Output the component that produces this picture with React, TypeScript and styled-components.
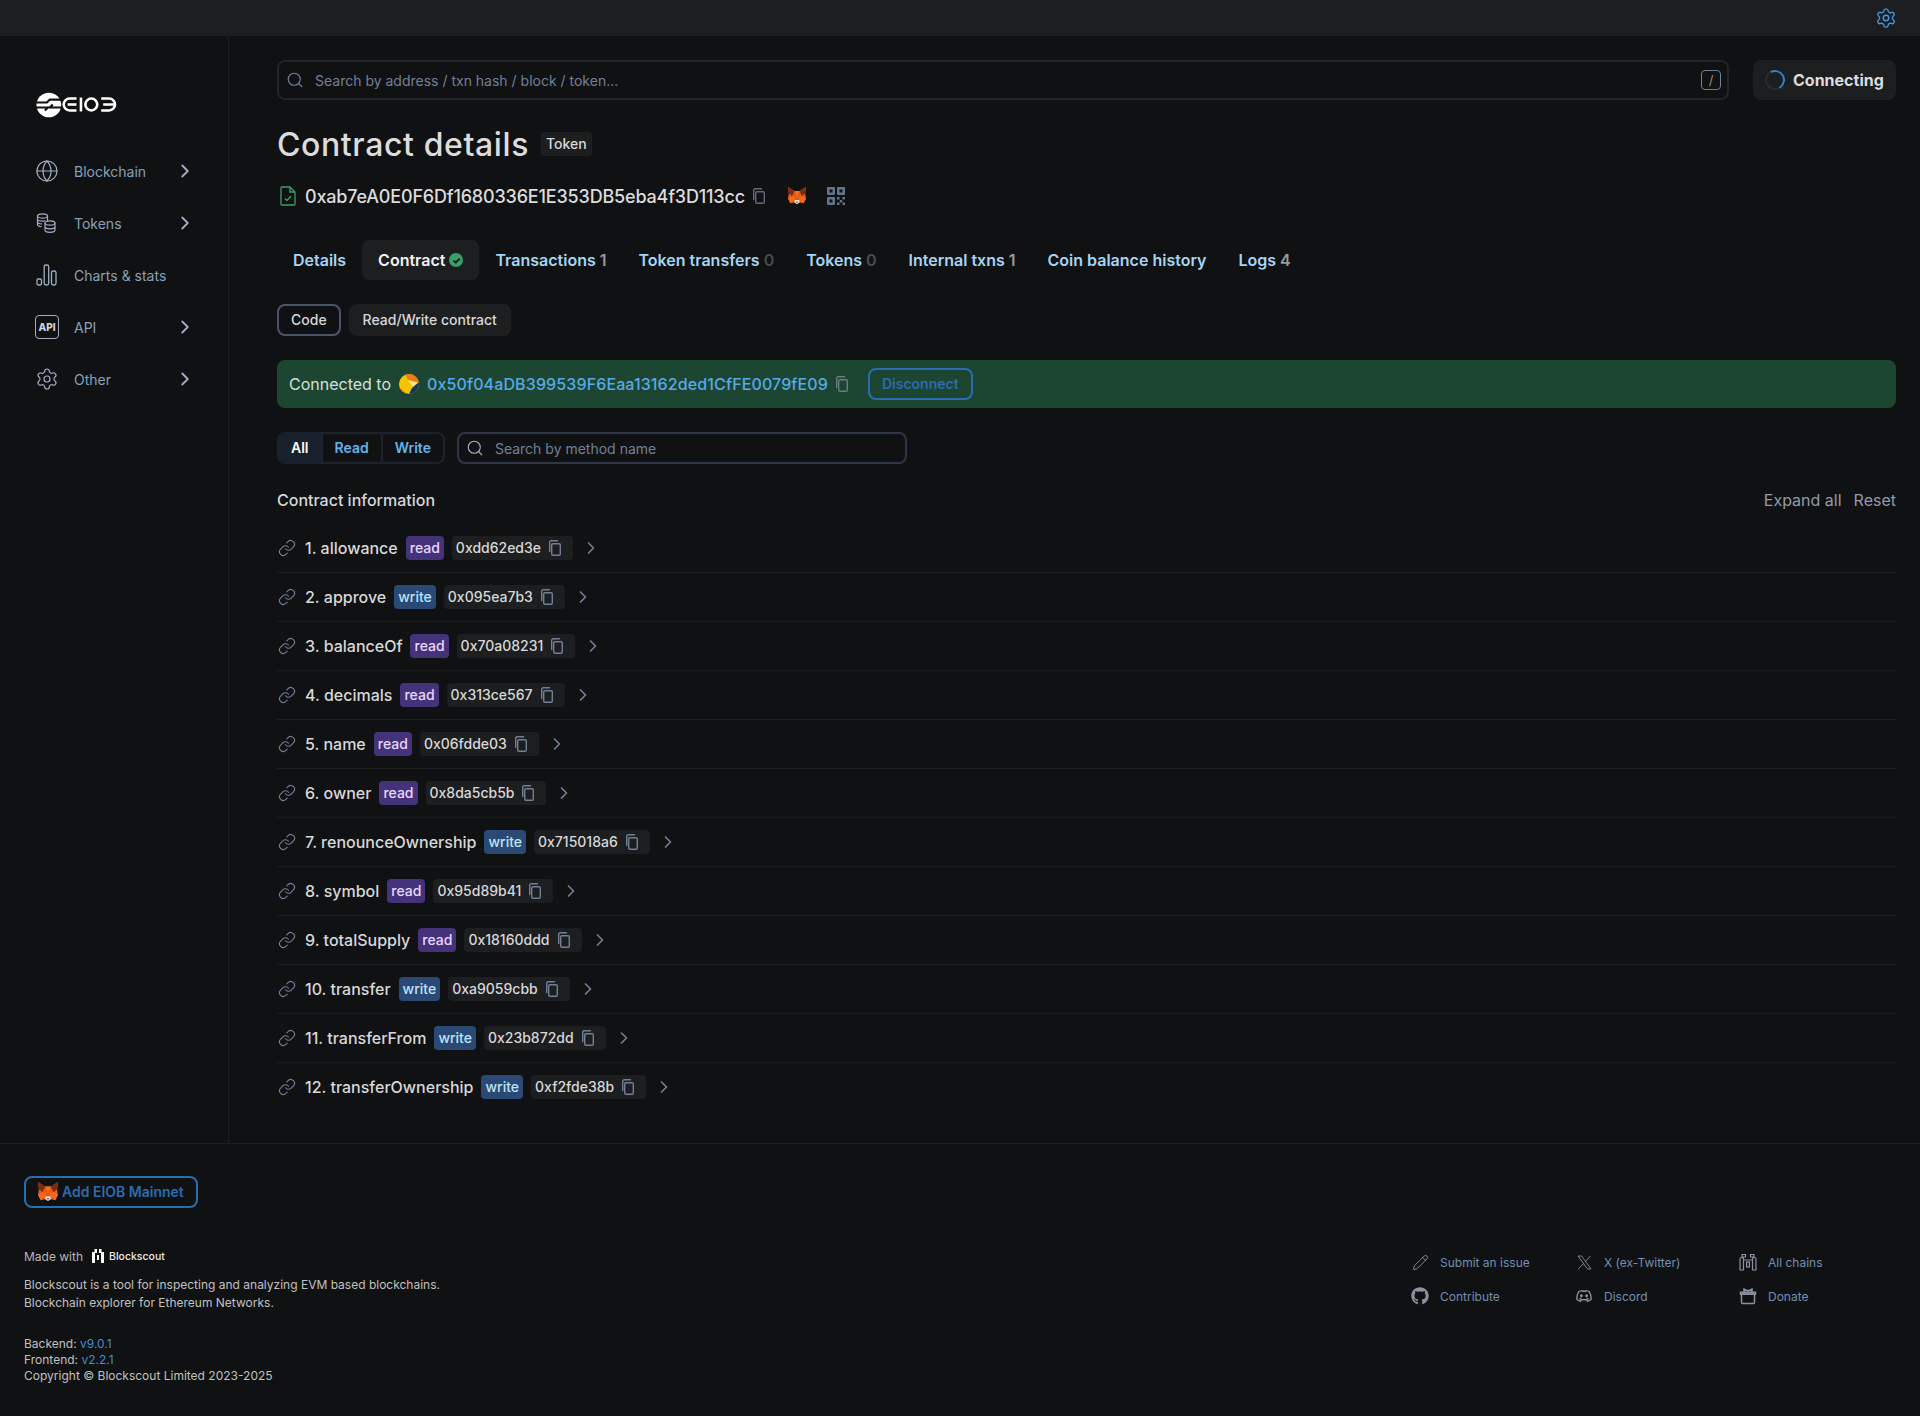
import React from "react";
import styled, { createGlobalStyle } from "styled-components";
import { ChevronRight, Globe, Link as LinkIcon, Pencil, Search, Settings } from "lucide-react";
import { FaGithub } from "react-icons/fa";
import { RiDiscordLine } from "react-icons/ri";

const methods = [
  { name: "1. allowance", kind: "read", hash: "0xdd62ed3e" },
  { name: "2. approve", kind: "write", hash: "0x095ea7b3" },
  { name: "3. balanceOf", kind: "read", hash: "0x70a08231" },
  { name: "4. decimals", kind: "read", hash: "0x313ce567" },
  { name: "5. name", kind: "read", hash: "0x06fdde03" },
  { name: "6. owner", kind: "read", hash: "0x8da5cb5b" },
  { name: "7. renounceOwnership", kind: "write", hash: "0x715018a6" },
  { name: "8. symbol", kind: "read", hash: "0x95d89b41" },
  { name: "9. totalSupply", kind: "read", hash: "0x18160ddd" },
  { name: "10. transfer", kind: "write", hash: "0xa9059cbb" },
  { name: "11. transferFrom", kind: "write", hash: "0x23b872dd" },
  { name: "12. transferOwnership", kind: "write", hash: "0xf2fde38b" },
];

const tabs = [
  { label: "Details" },
  { label: "Contract", active: true, verified: true },
  { label: "Transactions", count: "1" },
  { label: "Token transfers", count: "0", muted: true },
  { label: "Tokens", count: "0", muted: true },
  { label: "Internal txns", count: "1" },
  { label: "Coin balance history" },
  { label: "Logs", count: "4" },
];

const CopyGlyph = ({ size = 16 }: { size?: number }) => (
  <svg width={size} height={size} viewBox="0 0 16 16" fill="none" stroke="currentColor" strokeWidth="1.4">
    <rect x="4.7" y="3.7" width="8.6" height="11.6" rx="1.2" />
    <path d="M2.7 11.5V2.2c0-.8.6-1.500 1.500-1.500h6.300" strokeLinecap="round" />
  </svg>
);

const Fox = ({ size = 18 }: { size?: number }) => (
  <svg width={size} height={size} viewBox="1 1 22 22">
    <polygon points="1,1 9,6 15,6 23,1 22,9 23,15 20,21 15,20 9,20 4,21 1,15 2,9" fill="#e2591b" />
    <polygon points="1,1 9,6 6,12 2,9" fill="#7a2e10" />
    <polygon points="23,1 15,6 18,12 22,9" fill="#7a2e10" />
    <polygon points="9,6 15,6 12,14" fill="#f6701b" />
    <polygon points="6,12 10,13 9,17 4,21 1,15" fill="#ee6a1c" />
    <polygon points="18,12 14,13 15,17 20,21 23,15" fill="#ee6a1c" />
    <polygon points="9,17 15,17 15,20 12,22 9,20" fill="#f5e6d8" />
    <polygon points="10.500,19 13.500,19 12,20.500" fill="#232323" />
  </svg>
);

const QrGlyph = () => (
  <svg width="18" height="18" viewBox="0 0 18 18" fill="#64748b">
    <path fillRule="evenodd" d="M0 1.200C0 .5.5 0 1.200 0h5.600C7.500 0 8 .5 8 1.200v5.600C8 7.500 7.500 8 6.800 8H1.200C.5 8 0 7.500 0 6.800zM2.500 2.500v3h3v-3z" />
    <path fillRule="evenodd" d="M10 1.200C10 .5 10.500 0 11.200 0h5.600C17.500 0 18 .5 18 1.200v5.600c0 .7-.5 1.200-1.200 1.200h-5.600C10.500 8 10 7.500 10 6.800zM12.500 2.500v3h3v-3z" />
    <path fillRule="evenodd" d="M0 11.200C0 10.500.5 10 1.200 10h5.600C7.500 10 8 10.500 8 11.200v5.600C8 17.500 7.500 18 6.800 18H1.200C.5 18 0 17.500 0 16.800zM2.500 12.500v3h3v-3z" />
    <rect x="10" y="10" width="2.500" height="2.500" /><rect x="15.500" y="10" width="2.500" height="2.500" />
    <rect x="12.800" y="13" width="2.500" height="2.500" /><rect x="10" y="15.500" width="2.500" height="2.500" />
    <rect x="15.500" y="15.500" width="2.500" height="2.500" />
  </svg>
);

const CoinsGlyph = () => (
  <svg width="20" height="20" viewBox="0 0 20 20" fill="none" stroke="currentColor" strokeWidth="1.200">
    <ellipse cx="6.500" cy="3" rx="5" ry="2.200" />
    <path d="M1.500 3v8.500c0 1.200 1.800 2 4 2.200M11.500 3v5M1.500 6c0 1.200 2.200 2.200 5 2.200 1.200 0 2.200-.2 3-.5M1.500 8.800c0 1.200 2 2.100 4.500 2.200" />
    <ellipse cx="14" cy="10" rx="5" ry="2.200" />
    <path d="M9 10v7c0 1.300 2.200 2.300 5 2.300s5-1 5-2.300v-7M9 13.500c0 1.300 2.200 2.300 5 2.300s5-1 5-2.300" />
  </svg>
);

const BarsGlyph = () => (
  <svg width="21" height="22" viewBox="0 0 21 22" fill="none" stroke="currentColor" strokeWidth="1.300">
    <rect x="1" y="15" width="4.500" height="6" rx="1.400" />
    <rect x="8.200" y="1" width="4.500" height="20" rx="1.800" />
    <rect x="15.500" y="7" width="4.500" height="14" rx="1.800" />
  </svg>
);

const Logo = () => (
  <svg width="81" height="26" viewBox="0 0 82 26" fill="none">
    <circle cx="13" cy="13" r="12.500" fill="#fff" />
    <path d="M0 10.500h11l3-3h12M0 15.500h12l-3 3M26 15.500H14l3-3" stroke="#101112" strokeWidth="2.200" />
    <g stroke="#fff" strokeWidth="2.600">
      <path d="M41 6.500H34a6 6 0 0 0 0 12h7" />
      <path d="M32 12.500h9" />
      <path d="M45.500 5.500v14" />
      <rect x="50" y="6.500" width="12" height="12" rx="6" />
      <path d="M66 6.500h8a6 6 0 0 1 0 12h-8M68 12.500h11" />
    </g>
  </svg>
);

const BlockscoutMark = ({ size = 14 }: { size?: number }) => (
  <svg width={size} height={size} viewBox="0 0 14 14" fill="#fff">
    <path d="M1 3h3v11H1zM10 3h3v11h-3zM3.500 0h2.500v4H3.500zM8 0h2.500v4H8zM6 6h2v5H6z" />
  </svg>
);

const XGlyph = () => (
  <svg width="15" height="15" viewBox="0 0 15 15" fill="none" stroke="currentColor" strokeWidth="0.900">
    <path d="M1 1h3.500l9.500 13h-3.500zM13.500 1L8.300 6.700M6.500 8.600L1.300 14" />
  </svg>
);

const ChainsGlyph = () => (
  <svg width="18" height="18" viewBox="0 0 18 18" fill="none" stroke="currentColor" strokeWidth="1.200">
    <path d="M1 6c0-1 .7-1.500 1.500-1.500S4.500 5 4.500 6v11H1zM13.500 6c0-1 .7-1.500 1.500-1.500S17 5 17 6v11h-3.500zM4.500 7h9M3 1.500h3.500V4H3zM11.500 1.500H15V4h-3.500z" />
    <rect x="7.600" y="9" width="2.800" height="5" />
  </svg>
);

const GiftGlyph = () => (
  <svg width="18" height="18" viewBox="0 0 18 18" fill="none" stroke="currentColor" strokeWidth="1.500">
    <rect x="2.500" y="7" width="13" height="9.500" rx="1" />
    <path d="M1.500 5.200h15v2h-15zM5 5V2l2.500 1.500M13 5V2l-2.500 1.500M7.500 3.500h3" />
  </svg>
);

const ContractFile = () => (
  <svg width="16" height="20" viewBox="0 0 16 20" fill="none" stroke="#38a169" strokeWidth="1.300">
    <path d="M2 1h8l5 5v12a1 1 0 0 1-1 1H2a1 1 0 0 1-1-1V2a1 1 0 0 1 1-1zM10 1v5h5" />
    <path d="M5 12.500l2 2 4-4.500" />
  </svg>
);

const Jazzicon = () => (
  <svg width="20" height="20" viewBox="0 0 20 20">
    <defs>
      <clipPath id="jazz"><circle cx="10" cy="10" r="10" /></clipPath>
    </defs>
    <g clipPath="url(#jazz)">
      <rect width="20" height="20" fill="#f5c400" />
      <polygon points="5,-2 22,-2 22,9 9,6" fill="#f07a12" />
      <polygon points="9,6 19,9 14,13" fill="#f7e38a" />
      <polygon points="20,8 22,20 9,22 13,14" fill="#0e3a5f" />
      <polygon points="0,13 8,20 0,22" fill="#f07a12" />
    </g>
  </svg>
);

export default function App() {
  return (
    <>
      <GlobalStyle />
      <TopBar>
        <Settings size={22} strokeWidth={1.5} color="#4299e1" />
      </TopBar>
      <Layout>
        <Sidebar>
          <LogoWrap>
            <Logo />
          </LogoWrap>
          <NavList>
            <NavItem>
              <NavIcon $pull><Globe size={24} strokeWidth={1.2} /></NavIcon>
              <NavLabel>Blockchain</NavLabel>
              <ChevronRight size={22} color="#a0aec0" />
            </NavItem>
            <NavItem>
              <NavIcon><CoinsGlyph /></NavIcon>
              <NavLabel>Tokens</NavLabel>
              <ChevronRight size={22} color="#a0aec0" />
            </NavItem>
            <NavItem>
              <NavIcon><BarsGlyph /></NavIcon>
              <NavLabel>Charts &amp; stats</NavLabel>
            </NavItem>
            <NavItem>
              <NavIcon><ApiBadge>API</ApiBadge></NavIcon>
              <NavLabel>API</NavLabel>
              <ChevronRight size={22} color="#a0aec0" />
            </NavItem>
            <NavItem>
              <NavIcon $pull><Settings size={24} strokeWidth={1.2} /></NavIcon>
              <NavLabel>Other</NavLabel>
              <ChevronRight size={22} color="#a0aec0" />
            </NavItem>
          </NavList>
        </Sidebar>

        <Main>
          <SearchRow>
            <GlobalSearch>
              <Search size={18} color="#718096" strokeWidth={1.5} />
              <SearchText>Search by address / txn hash / block / token...</SearchText>
              <SlashKey>/</SlashKey>
            </GlobalSearch>
            <ConnectButton>
              <Spinner />
              Connecting
            </ConnectButton>
          </SearchRow>

          <TitleRow>
            <Title>Contract details</Title>
            <TokenTag>Token</TokenTag>
          </TitleRow>

          <AddressRow>
            <ContractFile />
            <AddressText>0xab7eA0E0F6Df1680336E1E353DB5eba4f3D113cc</AddressText>
            <MutedIcon><CopyGlyph /></MutedIcon>
            <FoxSlot><Fox /></FoxSlot>
            <QrSlot><QrGlyph /></QrSlot>
          </AddressRow>

          <TabBar>
            {tabs.map((t) => (
              <Tab key={t.label} $active={t.active}>
                {t.label}
                {t.verified && <VerifiedDot>✓</VerifiedDot>}
                {t.count && <TabCount $muted={t.muted}>{t.count}</TabCount>}
              </Tab>
            ))}
          </TabBar>

          <SubTabs>
            <SubTab $selected>Code</SubTab>
            <SubTab>Read/Write contract</SubTab>
          </SubTabs>

          <ConnectedBar>
            <span>Connected to</span>
            <Jazzicon />
            <WalletAddress>0x50f04aDB399539F6Eaa13162ded1CfFE0079fE09</WalletAddress>
            <BarCopy><CopyGlyph /></BarCopy>
            <DisconnectButton>Disconnect</DisconnectButton>
          </ConnectedBar>

          <FilterRow>
            <Segments>
              <Segment $active>All</Segment>
              <Segment>Read</Segment>
              <Segment>Write</Segment>
            </Segments>
            <MethodSearch>
              <Search size={18} color="#a0aec0" strokeWidth={1.5} />
              <span>Search by method name</span>
            </MethodSearch>
          </FilterRow>

          <InfoHeader>
            <InfoTitle>Contract information</InfoTitle>
            <InfoActions>
              <span>Expand all</span>
              <span>Reset</span>
            </InfoActions>
          </InfoHeader>

          <div>
            {methods.map((m, i) => (
              <MethodRow key={m.hash} $last={i === methods.length - 1}>
                <LinkSlot><LinkIcon size={18} strokeWidth={1.5} /></LinkSlot>
                <MethodName>{m.name}</MethodName>
                <KindTag $write={m.kind === "write"}>{m.kind}</KindTag>
                <HashChip>
                  {m.hash}
                  <CopySlot><CopyGlyph /></CopySlot>
                </HashChip>
                <RowChevron><ChevronRight size={20} /></RowChevron>
              </MethodRow>
            ))}
          </div>
        </Main>
      </Layout>

      <Footer>
        <FooterLeft>
          <AddNetwork>
            <Fox size={20} />
            Add EIOB Mainnet
          </AddNetwork>
          <MadeWith>
            Made with
            <BlockscoutBrand>
              <BlockscoutMark />
              Blockscout
            </BlockscoutBrand>
          </MadeWith>
          <FooterBlurb>
            Blockscout is a tool for inspecting and analyzing EVM based blockchains.
            <br />
            Blockchain explorer for Ethereum Networks.
          </FooterBlurb>
          <Versions>
            Backend: <VersionLink>v9.0.1</VersionLink>
            <br />
            Frontend: <VersionLink>v2.2.1</VersionLink>
            <br />
            Copyright © Blockscout Limited 2023-2025
          </Versions>
        </FooterLeft>
        <FooterLinks>
          <FooterLink><LinkGlyph><Pencil size={17} strokeWidth={1.3} /></LinkGlyph><span>Submit an issue</span></FooterLink>
          <FooterLink><LinkGlyph><XGlyph /></LinkGlyph><span>X (ex-Twitter)</span></FooterLink>
          <FooterLink><LinkGlyph><ChainsGlyph /></LinkGlyph><span>All chains</span></FooterLink>
          <FooterLink><LinkGlyph><FaGithub size={18} /></LinkGlyph><span>Contribute</span></FooterLink>
          <FooterLink><LinkGlyph><RiDiscordLine size={20} /></LinkGlyph><span>Discord</span></FooterLink>
          <FooterLink><LinkGlyph><GiftGlyph /></LinkGlyph><span>Donate</span></FooterLink>
        </FooterLinks>
      </Footer>
    </>
  );
}

const GlobalStyle = createGlobalStyle`
  html, body {
    margin: 0;
    background: #101112;
    color: #e2e2e3;
    font-family: "Inter", "Liberation Sans", sans-serif;
  }
  * {
    box-sizing: border-box;
  }
`;

const TopBar = styled.div`
  height: 36px;
  background: #1d1e20;
  display: flex;
  align-items: center;
  justify-content: flex-end;
  padding: 0 23px;
`;

const Layout = styled.div`
  display: flex;
  height: 1107px;
`;

const Sidebar = styled.aside`
  width: 229px;
  flex-shrink: 0;
  border-right: 1px solid #1d1e20;
  padding: 56px 0 0 36px;
`;

const LogoWrap = styled.div`
  height: 26px;
`;

const NavList = styled.nav`
  margin-top: 27px;
  display: flex;
  flex-direction: column;
`;

const NavItem = styled.div`
  height: 52px;
  display: flex;
  align-items: center;
  color: #8aa0bb;
  width: 160px;
`;

const NavIcon = styled.span<{ $pull?: boolean }>`
  width: 38px;
  display: flex;
  color: #a0aec0;
  flex-shrink: 0;
  margin-left: ${(p) => (p.$pull ? "-1px" : "0")};
  margin-right: ${(p) => (p.$pull ? "1px" : "0")};
`;

const NavLabel = styled.span`
  flex: 1;
  font-size: 14px;
`;

const ApiBadge = styled.span`
  width: 24px;
  height: 24px;
  margin-left: -1px;
  border: 1px solid #a0aec0;
  border-radius: 4px;
  font-size: 10px;
  font-weight: 800;
  display: flex;
  align-items: center;
  justify-content: center;
  color: #cbd5e0;
`;

const Main = styled.main`
  flex: 1;
  min-width: 0;
  padding: 24px 24px 0 48px;
`;

const SearchRow = styled.div`
  display: flex;
  gap: 24px;
`;

const GlobalSearch = styled.div`
  flex: 1;
  height: 40px;
  border: 2px solid #232428;
  border-radius: 8px;
  display: flex;
  align-items: center;
  padding: 0 6px 0 7px;
  color: #718096;
  font-size: 14px;
`;

const SearchText = styled.span`
  flex: 1;
  margin-left: 11px;
`;

const SlashKey = styled.span`
  width: 20px;
  height: 20px;
  border: 1px solid #718096;
  border-radius: 4px;
  font-size: 13px;
  display: flex;
  align-items: center;
  justify-content: center;
  color: #a08a70;
`;

const ConnectButton = styled.div`
  width: 143px;
  height: 40px;
  background: #1d1e20;
  border-radius: 8px;
  display: flex;
  align-items: center;
  gap: 8px;
  padding-left: 12px;
  font-size: 16px;
  font-weight: 700;
  color: #dcdcdd;
`;

const Spinner = styled.span`
  width: 20px;
  height: 20px;
  border-radius: 50%;
  border: 2px solid #2a2b2e;
  border-top-color: #3182ce;
  border-right-color: #3182ce;
  transform: rotate(15deg);
`;

const TitleRow = styled.div`
  display: flex;
  align-items: center;
  gap: 12px;
  margin-top: 22px;
  height: 44px;
`;

const Title = styled.h1`
  margin: 0;
  font-size: 32px;
  font-weight: 500;
  color: #dcdcdd;
  letter-spacing: 0.6px;
`;

const TokenTag = styled.span`
  height: 24px;
  padding: 0 5px;
  background: #1d1e20;
  border-radius: 4px;
  font-size: 14px;
  font-weight: 500;
  line-height: 24px;
  color: #d8d8d9;
`;

const AddressRow = styled.div`
  display: flex;
  align-items: center;
  height: 24px;
  margin-top: 18px;
  padding-left: 3px;
`;

const AddressText = styled.span`
  margin-left: 9px;
  font-size: 18px;
  font-weight: 500;
  letter-spacing: -0.18px;
  color: #dcdcdd;
`;

const MutedIcon = styled.span`
  display: flex;
  margin-left: 6px;
  color: #5f6b7c;
`;

const BarCopy = styled.span`
  display: flex;
  margin-left: -2px;
  color: #6b7a85;
`;

const FoxSlot = styled.span`
  display: flex;
  margin-left: 21px;
`;

const QrSlot = styled.span`
  display: flex;
  margin-left: 21px;
`;

const TabBar = styled.div`
  display: flex;
  margin-top: 32px;
`;

const Tab = styled.div<{ $active?: boolean }>`
  height: 40px;
  padding: 0 16px;
  display: flex;
  align-items: center;
  gap: 4px;
  font-size: 16px;
  font-weight: 600;
  border-radius: 8px;
  white-space: nowrap;
  color: ${(p) => (p.$active ? "#f2f2f2" : "#a6d4f5")};
  background: ${(p) => (p.$active ? "#1d1e20" : "transparent")};
`;

const VerifiedDot = styled.span`
  width: 14px;
  height: 14px;
  border-radius: 50%;
  background: #38a169;
  color: #101112;
  font-size: 10px;
  font-weight: 800;
  display: flex;
  align-items: center;
  justify-content: center;
`;

const TabCount = styled.span<{ $muted?: boolean }>`
  font-weight: 600;
  color: ${(p) => (p.$muted ? "#4a4b4d" : "#9a9a9a")};
`;

const SubTabs = styled.div`
  display: flex;
  gap: 8px;
  margin-top: 24px;
`;

const SubTab = styled.div<{ $selected?: boolean }>`
  height: 32px;
  padding: 0 ${(p) => (p.$selected ? "12px" : "14px")} 1px;
  display: flex;
  align-items: center;
  border-radius: 8px;
  font-size: 14px;
  font-weight: 500;
  color: #d8d8d9;
  border: ${(p) => (p.$selected ? "2px solid #4a5568" : "none")};
  background: ${(p) => (p.$selected ? "transparent" : "#1d1e20")};
`;

const ConnectedBar = styled.div`
  height: 48px;
  margin-top: 24px;
  padding: 0 12px;
  background: #1c4532;
  border-radius: 8px;
  display: flex;
  align-items: center;
  gap: 8px;
  font-size: 16px;
  color: #d8e0da;
`;

const WalletAddress = styled.span`
  color: #58a9e8;
  font-weight: 500;
  letter-spacing: 0.12px;
`;

const DisconnectButton = styled.div`
  height: 32px;
  margin-left: 10px;
  padding: 0 12px 1px;
  border: 2px solid #2b6cb0;
  border-radius: 8px;
  display: flex;
  align-items: center;
  font-size: 14px;
  font-weight: 600;
  color: #2b6cb0;
`;

const FilterRow = styled.div`
  display: flex;
  gap: 12px;
  margin-top: 24px;
`;

const Segments = styled.div`
  display: flex;
  height: 32px;
  border: 2px solid #1b222c;
  border-radius: 8px;
  overflow: hidden;
`;

const Segment = styled.div<{ $active?: boolean }>`
  padding: 0 12px 1px;
  display: flex;
  align-items: center;
  font-size: 14px;
  font-weight: 600;
  color: ${(p) => (p.$active ? "#ffffff" : "#63b3ed")};
  background: ${(p) => (p.$active ? "#19212c" : "transparent")};

  & + & {
    border-left: 2px solid #1b222c;
  }
`;

const MethodSearch = styled.div`
  width: 450px;
  height: 32px;
  border: 2px solid #2d3748;
  border-radius: 8px;
  display: flex;
  align-items: center;
  gap: 11px;
  padding-left: 7px;
  font-size: 14px;
  color: #718096;
`;

const InfoHeader = styled.div`
  display: flex;
  justify-content: space-between;
  align-items: center;
  height: 24px;
  margin-top: 24px;
`;

const InfoTitle = styled.span`
  font-size: 16px;
  font-weight: 500;
  color: #d8d8d9;
`;

const InfoActions = styled.div`
  display: flex;
  gap: 12px;
  font-size: 16px;
  color: #8f9bad;
`;

const MethodRow = styled.div<{ $last?: boolean }>`
  height: 49px;
  padding-top: 12px;
  padding-bottom: 12px;
  display: flex;
  align-items: center;
  border-bottom: 1px solid ${(p) => (p.$last ? "transparent" : "#1d1e20")};
  &:first-child {
    margin-top: 12px;
  }
`;

const LinkSlot = styled.span`
  display: flex;
  width: 28px;
  padding-left: 1px;
  color: #718096;
`;

const MethodName = styled.span`
  font-size: 16px;
  font-weight: 500;
  color: #d8d8d9;
`;

const KindTag = styled.span<{ $write?: boolean }>`
  height: 24px;
  margin-left: 8px;
  padding: 0 4px;
  border-radius: 4px;
  font-size: 14px;
  font-weight: 500;
  line-height: 24px;
  background: ${(p) => (p.$write ? "#2a4a75" : "#44337a")};
  color: ${(p) => (p.$write ? "#bee3f8" : "#e9d8fd")};
`;

const HashChip = styled.span`
  height: 24px;
  margin-left: 8px;
  padding: 0 10px 1px 4px;
  border-radius: 4px;
  background: #1d1e20;
  display: flex;
  align-items: center;
  gap: 6px;
  font-size: 14px;
  font-weight: 500;
  color: #d8d8d9;
`;

const CopySlot = styled.span`
  display: flex;
  color: #718096;
`;

const RowChevron = styled.span`
  display: flex;
  margin-left: 8px;
  color: #718096;
`;

const Footer = styled.footer`
  border-top: 1px solid #1d1e20;
  padding: 32px 24px 0;
  height: 273px;
  display: flex;
  justify-content: space-between;
`;

const FooterLeft = styled.div`
  display: flex;
  flex-direction: column;
  align-items: flex-start;
`;

const AddNetwork = styled.div`
  height: 32px;
  padding: 0 12px 1px;
  border: 2px solid #2b6cb0;
  border-radius: 8px;
  display: flex;
  align-items: center;
  gap: 4px;
  font-size: 14px;
  font-weight: 600;
  color: #2b6cb0;
`;

const MadeWith = styled.div`
  margin-top: 38px;
  height: 20px;
  display: flex;
  align-items: center;
  gap: 8px;
  font-size: 12px;
  color: #b8b8b9;
`;

const BlockscoutBrand = styled.span`
  display: flex;
  align-items: center;
  gap: 4px;
  font-size: 10.5px;
  font-weight: 500;
  color: #e8e8e8;
`;

const FooterBlurb = styled.div`
  margin-top: 10px;
  font-size: 12px;
  line-height: 18px;
  color: #c0c0c1;
`;

const Versions = styled.div`
  margin-top: 24px;
  font-size: 12px;
  line-height: 16px;
  color: #c0c0c1;
`;

const VersionLink = styled.span`
  color: #3f8fd6;
`;

const FooterLinks = styled.div`
  display: grid;
  grid-template-columns: 164px 164px 157px;
  grid-auto-rows: 20px;
  row-gap: 14px;
  margin-top: 76px;
`;

const FooterLink = styled.div`
  display: flex;
  align-items: center;
  gap: 11px;
  font-size: 12px;
  color: #718fb5;
`;

const LinkGlyph = styled.span`
  width: 18px;
  display: flex;
  justify-content: center;
  color: #8a939f;
  flex-shrink: 0;
`;
